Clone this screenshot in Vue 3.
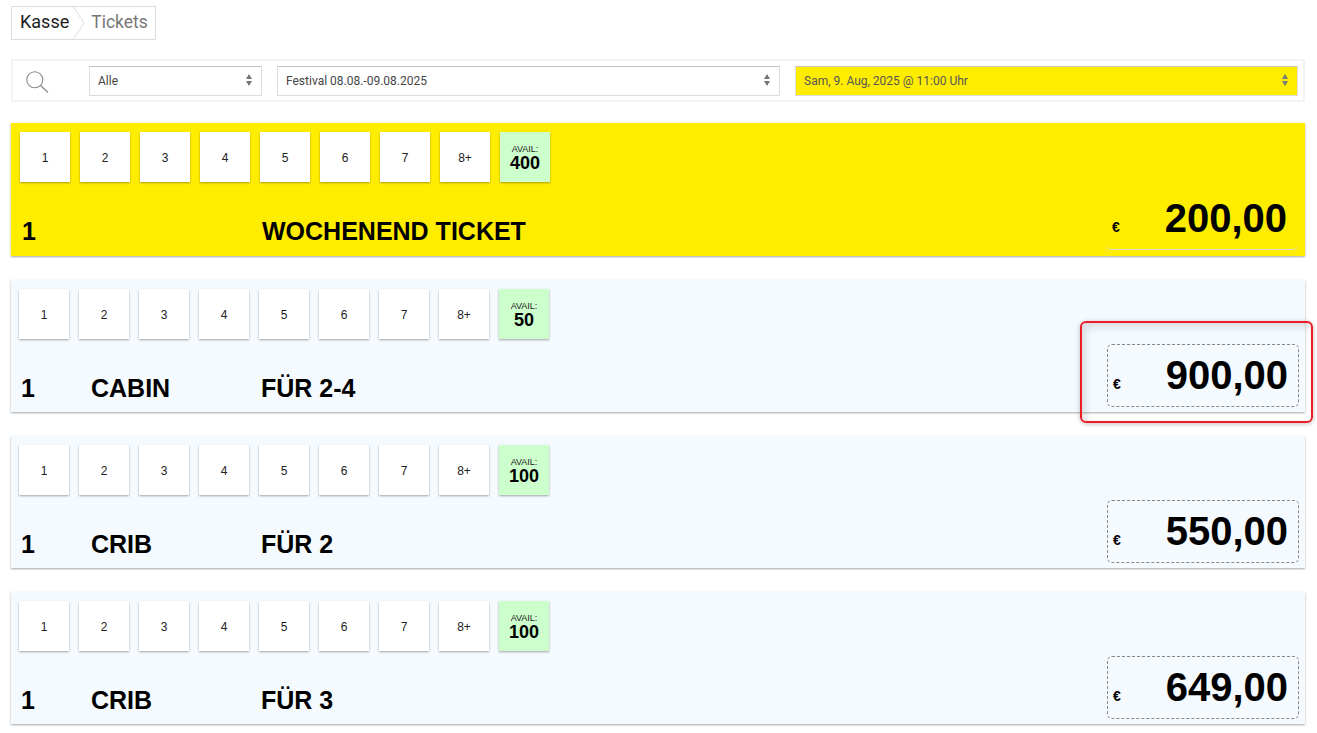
<script setup>
const qty = ['1', '2', '3', '4', '5', '6', '7', '8+']
const tickets = [
  { id: 1, avail: 400, name: '', desc: 'WOCHENEND TICKET', price: '200,00', active: true },
  { id: 2, avail: 50, name: 'CABIN', desc: 'FÜR 2-4', price: '900,00' },
  { id: 3, avail: 100, name: 'CRIB', desc: 'FÜR 2', price: '550,00' },
  { id: 4, avail: 100, name: 'CRIB', desc: 'FÜR 3', price: '649,00' }
]
</script>

<template>
  <div class="page">
    <nav class="crumbs">
      <span class="crumb first">Kasse</span>
      <svg class="chev" width="12" height="32" viewBox="0 0 12 32"><path d="M0.5 0L11 16L0.5 32" fill="none" stroke="#ddd" /></svg>
      <span class="crumb">Tickets</span>
    </nav>

    <div class="filters">
      <svg class="search" width="23" height="22" viewBox="0 0 23 22">
        <circle cx="8.8" cy="8.8" r="8" fill="none" stroke="#8a8a8a" stroke-width="1.1" />
        <path d="M14.6 14.6L22 21.4" fill="none" stroke="#8a8a8a" stroke-width="1.3" />
      </svg>
      <div class="select small">Alle<span class="arrows"></span></div>
      <div class="select mid">Festival 08.08.-09.08.2025<span class="arrows"></span></div>
      <div class="select mid hot">Sam, 9. Aug, 2025 @ 11:00 Uhr<span class="arrows"></span></div>
    </div>

    <section v-for="t in tickets" :key="t.id" class="row" :class="{ active: t.active }">
      <div class="btns">
        <button v-for="q in qty" :key="q" class="btn">{{ q }}</button>
        <div class="btn avail">
          <span class="avail-label">AVAIL:</span>
          <strong class="avail-num">{{ t.avail }}</strong>
        </div>
      </div>
      <div class="info">
        <span class="count">1</span>
        <span class="name">{{ t.name }}</span>
        <span class="desc">{{ t.desc }}</span>
        <div class="price">
          <span class="euro">€</span>
          <span class="amount">{{ t.price }}</span>
        </div>
      </div>
    </section>

    <div class="highlight"></div>
  </div>
</template>

<style>
html, body { margin: 0; background: #fff; }
</style>

<style scoped>
.page {
  position: relative;
  box-sizing: border-box;
  height: 733px;
  overflow: hidden;
  padding: 6px 12px 0 11px;
  font-family: "Liberation Sans", Arial, sans-serif;
  color: #000;
}
.crumbs {
  display: flex;
  align-items: center;
  box-sizing: border-box;
  height: 34px;
  width: 145px;
  border: 1px solid #ddd;
  font-family: Roboto, sans-serif;
  font-size: 17.5px;
  line-height: 28px;
}
.crumb { color: #777; padding: 0 0 2px 6px; }
.crumb.first { color: #1b1c1d; font-size: 18px; padding: 0 4px 2px 8px; }
.chev { flex: none; }
.filters {
  display: flex;
  align-items: center;
  box-sizing: border-box;
  height: 43px;
  margin-top: 19px;
  padding: 0 5px 0 13px;
  border: 2px solid #f3f3f3;
  gap: 15px;
}
.search { flex: none; margin-right: 25px; margin-top: 3px; }
.select {
  position: relative;
  box-sizing: border-box;
  height: 30px;
  line-height: 28px;
  padding-left: 8px;
  border: 1px solid #ddd;
  border-top-color: #c4c4c4;
  font-family: Roboto, sans-serif;
  font-size: 12px;
  color: #444;
}
.small { width: 173px; }
.mid { flex: 1; }
.hot { background: #ffed00; color: #555; }
.arrows {
  position: absolute;
  right: 9px;
  top: 7px;
  width: 0;
  height: 0;
  border-left: 3px solid transparent;
  border-right: 3px solid transparent;
  border-bottom: 5px solid #777;
}
.arrows::after {
  content: "";
  position: absolute;
  left: -3px;
  top: 7px;
  border-left: 3px solid transparent;
  border-right: 3px solid transparent;
  border-top: 5px solid #777;
}
.row {
  box-sizing: border-box;
  height: 132px;
  margin-top: 24px;
  padding: 9px 6px 5px 8px;
  background: #f5faff;
  box-shadow: 0 1px 2px rgba(0, 0, 0, 0.35);
}
.row.active {
  height: 133px;
  margin-top: 21px;
  padding: 9px 7px 6px 9px;
  background: #ffed00;
}
.btns { display: flex; gap: 10px; }
.btn {
  box-sizing: border-box;
  width: 50px;
  height: 50px;
  padding: 2px 0 0;
  border: 0;
  background: #fff;
  box-shadow: 0 1px 2px rgba(0, 0, 0, 0.35);
  font-family: "Liberation Sans", Arial, sans-serif;
  font-size: 12px;
  color: #222;
}
.avail {
  display: flex;
  flex-direction: column;
  align-items: center;
  justify-content: center;
  background: #ccffcc;
}
.avail-label { font-size: 9px; line-height: 9px; color: #222; }
.avail-num { font-size: 18px; line-height: 18px; color: #000; }
.info { display: flex; align-items: flex-end; margin-top: 5px; padding-left: 2px; }
.count, .name, .desc {
  font-size: 25px;
  font-weight: 700;
  line-height: 29px;
  margin-bottom: 4px;
}
.count { width: 70px; }
.name { width: 170px; }
.desc { flex: 1; }
.price {
  display: flex;
  align-items: flex-end;
  justify-content: space-between;
  box-sizing: border-box;
  width: 192px;
  height: 63px;
  padding: 0 10px 0 5px;
  border: 1px dashed #888;
  border-radius: 5px;
  font-weight: 700;
}
.active .price {
  border: 0;
  border-bottom: 1px solid #ddd;
  padding: 0 11px 0 6px;
}
.euro { font-size: 14px; line-height: 16px; margin-bottom: 14px; }
.amount { font-size: 40px; line-height: 46px; margin-bottom: 8px; }
.highlight {
  position: absolute;
  left: 1080px;
  top: 321px;
  box-sizing: border-box;
  width: 233px;
  height: 102px;
  border: 2px solid #ee1c25;
  border-radius: 6px;
  box-shadow: 0 1px 5px rgba(0, 0, 0, 0.25), inset 4px 4px 8px rgba(0, 0, 0, 0.12);
}
</style>
